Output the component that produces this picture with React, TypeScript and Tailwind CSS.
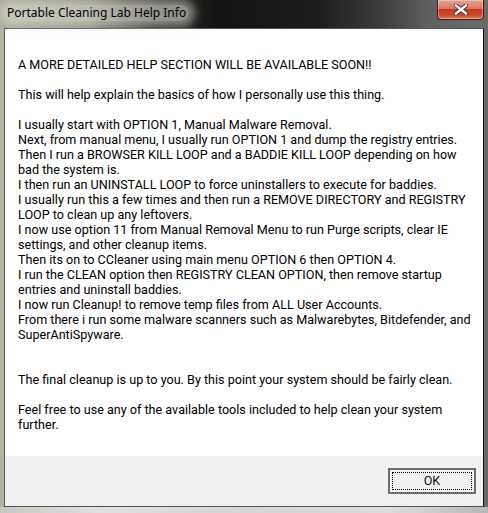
import React from "react";

const lines: string[] = [
  "A MORE DETAILED HELP SECTION WILL BE AVAILABLE SOON!!",
  "",
  "This will help explain the basics of how I personally use this thing.",
  "",
  "I usually start with OPTION 1, Manual Malware Removal.",
  "Next, from manual menu, I usually run OPTION 1 and dump the registry entries.",
  "Then I run a BROWSER KILL LOOP and a BADDIE KILL LOOP depending on how",
  "bad the system is.",
  "I then run an UNINSTALL LOOP to force uninstallers to execute for baddies.",
  "I usually run this a few times and then run a REMOVE DIRECTORY and REGISTRY",
  "LOOP to clean up any leftovers.",
  "I now use option 11 from Manual Removal Menu to run Purge scripts, clear IE",
  "settings, and other cleanup items.",
  "Then its on to CCleaner using main menu OPTION 6 then OPTION 4.",
  "I run the CLEAN option then REGISTRY CLEAN OPTION, then remove startup",
  "entries and uninstall baddies.",
  "I now run Cleanup! to remove temp files from ALL User Accounts.",
  "From there i run some malware scanners such as Malwarebytes, Bitdefender, and",
  "SuperAntiSpyware.",
  "",
  "",
  "The final cleanup is up to you. By this point your system should be fairly clean.",
  "",
  "Feel free to use any of the available tools included to help clean your system",
  "further.",
];

export default function App() {
  return (
    <div className="w-[488px] h-[513px] overflow-hidden flex flex-col bg-[linear-gradient(90deg,#b4b4a6_0%,#a8a898_20%,#8a8a80_30%,#6e6e68_60%,#6a6a6a_100%)] [font-family:'Noto_Sans',sans-serif]">
      {/* Title bar */}
      <div className="relative h-[28px] shrink-0 flex items-start bg-[linear-gradient(90deg,#a9a99a_0%,#9c9c8e_8%,#8d8d80_18%,#2a2a26_32%,#141414_45%,#1c1c1a_65%,#3c3c3a_78%,#606060_88%,#6a6a6a_100%)]">
        <div className="relative mt-[5px] ml-[4px] px-[3px] rounded-[8px] bg-[#dcdcd2]/60 shadow-[0_0_10px_6px_rgba(220,220,210,0.55)] text-[12px] leading-[16px] text-black">
          Portable Cleaning Lab Help Info
        </div>
        <div className="absolute top-0 right-[4px] w-[47px] h-[20px] rounded-b-[4px] border border-t-0 border-[#4a1a14] bg-[linear-gradient(180deg,#e4a493_0%,#d9765f_45%,#c2381f_50%,#c94a30_80%,#e07a5c_100%)] shadow-[inset_0_0_0_1px_rgba(255,255,255,0.35)] flex items-center justify-center">
          <svg width="14" height="11" viewBox="0 0 14 11">
            <path d="M2 1.5 L12 9.5 M12 1.5 L2 9.5" stroke="#3a2a28" strokeWidth="4.2" strokeLinecap="square" />
            <path d="M2 1.5 L12 9.5 M12 1.5 L2 9.5" stroke="#ffffff" strokeWidth="2.4" strokeLinecap="square" />
          </svg>
        </div>
      </div>
      {/* Client area */}
      <div className="ml-[4px] mr-[4px] h-[479px] shrink-0 border border-[#555555] border-r-[#111111] flex flex-col bg-white">
        <div className="h-[427px] shrink-0 bg-white pl-[13px] pt-[28px] text-[12.6px] leading-[15px] text-black [font-family:Roboto,sans-serif]">
          {lines.map((l, i) => (
            <div key={i} className="h-[15px] whitespace-nowrap">
              {l}
            </div>
          ))}
        </div>
        <div className="flex-1 bg-[#f0f0f0] flex justify-end items-start pt-[12px] pr-[7px]">
          <button className="w-[88px] h-[26px] border-2 border-[#6d6d6d] bg-[#f0f0f0] p-[2px] flex">
            <span className="flex-1 border border-dotted border-black flex items-center justify-center text-[12.6px] leading-none text-[#111] [font-family:Roboto,sans-serif]">
              OK
            </span>
          </button>
        </div>
      </div>
      <div className="flex-1 bg-[linear-gradient(90deg,#c8c8c0_0%,#e0e0dc_20%,#d4d4d4_50%,#dcdcdc_80%,#b8b8b8_100%)]" />
    </div>
  );
}
